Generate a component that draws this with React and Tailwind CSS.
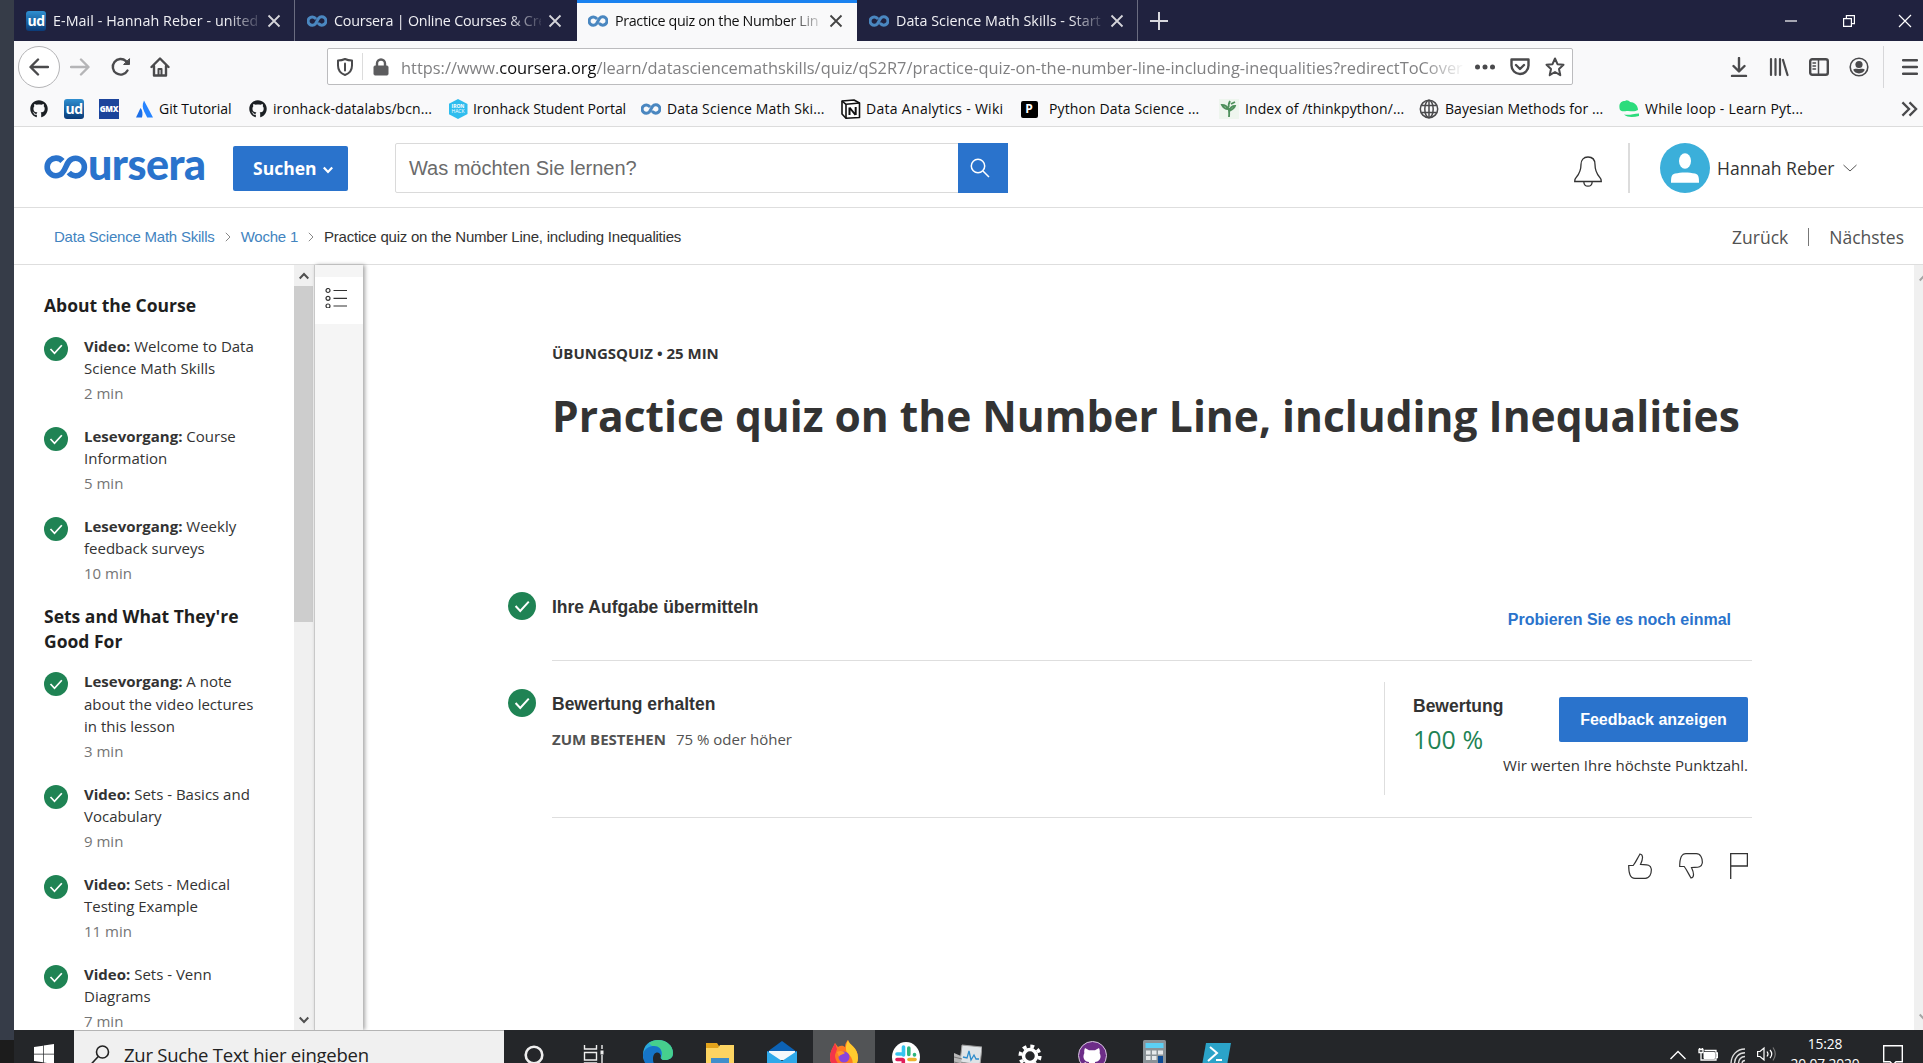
import React from "react";
import { FaGithub } from "react-icons/fa";

const UI = "font-['Open_Sans','Noto_Sans',sans-serif]";
const ARIAL = "font-['Liberation_Sans',Arial,sans-serif]";

function Infinity() {
  return (
    <svg viewBox="0 0 24 15" className="h-3.5 w-5 shrink-0" fill="none" stroke="#4a87c0" strokeWidth="3.6" strokeLinecap="round">
      <path d="M9.8 4A5 5 0 1 0 10 11L14 4.2A5 5 0 1 1 14.2 11" />
    </svg>
  );
}

function UdIcon() {
  return (
    <span className={`${UI} flex h-5 w-5 shrink-0 items-center justify-center rounded-[3px] bg-gradient-to-b from-[#2f8fd0] to-[#0b3b78] text-[14px] leading-none font-bold tracking-[-0.5px] text-white`}>
      ud
    </span>
  );
}

function Cross({ color }) {
  return (
    <svg viewBox="0 0 14 14" className="h-3.5 w-3.5 shrink-0" stroke={color} strokeWidth="1.8">
      <path d="M1.5 1.5l11 11M12.5 1.5l-11 11" />
    </svg>
  );
}

function Tab({ icon, title, active = false, divider = false, className }) {
  return (
    <div
      className={`flex h-full shrink-0 items-center ${
        active ? "border-t-3 border-[#1a82f0] bg-[#f9f9fa] pb-[3px] text-[#111]" : "text-[#f0f0f4]"
      } ${divider ? "border-r border-[#6a6c80]" : ""} ${className}`}
    >
      <div className="flex w-[27px] shrink-0 items-center">{icon}</div>
      <div className="w-[207px] shrink-0 text-[14.3px] leading-5 whitespace-nowrap [mask-image:linear-gradient(to_right,black_84%,transparent_102%)]">{title}</div>
      <div className="ml-[4px] flex w-5 justify-center">
        <Cross color={active ? "#444" : "#d5d5da"} />
      </div>
    </div>
  );
}

function TabBar() {
  return (
    <div className="flex h-[41px] items-center bg-[#20223f]">
      <Tab icon={<UdIcon />} title="E-Mail - Hannah Reber - united" divider className="w-[281px] pl-[12px] tracking-[0.06px]" />
      <Tab icon={<Infinity />} title="Coursera | Online Courses & Cre" className="w-[282px] pl-[12px] tracking-[-0.2px]" />
      <Tab icon={<Infinity />} title="Practice quiz on the Number Lin" active className="w-[280px] pl-[11px] tracking-[-0.34px]" />
      <Tab icon={<Infinity />} title="Data Science Math Skills - Start" divider className="w-[281px] pl-[12px] tracking-[0.02px]" />
      <svg viewBox="0 0 18 18" className="ml-3 h-[18px] w-[18px]" stroke="#d8d8de" strokeWidth="2">
        <path d="M9 0v18M0 9h18" />
      </svg>
      <div className="mr-[11px] ml-auto flex items-center gap-[43px]">
        <svg viewBox="0 0 12 12" className="mr-[3px] h-3 w-3" stroke="#fff" strokeWidth="1.2"><path d="M0 6h12" /></svg>
        <svg viewBox="0 0 12 12" className="h-3 w-3" fill="none" stroke="#fff" strokeWidth="1.2"><path d="M.6 3.6h7.8v7.8H.6zM3.4 3.4V.6h8v8H8.6" /></svg>
        <svg viewBox="0 0 14 14" className="h-3.5 w-3.5" stroke="#fff" strokeWidth="1.2"><path d="M1 1l12 12M13 1L1 13" /></svg>
      </div>
    </div>
  );
}

function NavIcon({ children, className = "h-5 w-5", view = "0 0 20 20", color = "#4a4a4c", sw = 2.4 }) {
  return (
    <svg viewBox={view} className={`${className} shrink-0`} fill="none" stroke={color} strokeWidth={sw} strokeLinecap="round" strokeLinejoin="round">
      {children}
    </svg>
  );
}

function NavBar() {
  return (
    <div className="flex h-[50px] items-center pt-px pl-1">
      <div className="flex h-[42px] w-[42px] items-center justify-center rounded-full border border-[#b4b4b6] bg-white">
        <NavIcon><path d="M19 10H2M9 2.5L1.5 10 9 17.5" /></NavIcon>
      </div>
      <NavIcon className="ml-[10px] h-5 w-5" color="#b5b5b7"><path d="M1 10h17M11 2.5l7.500 7.500-7.500 7.500" /></NavIcon>
      <NavIcon className="ml-[21px] h-5 w-5">
        <path d="M16.500 13.500A7.800 7.800 0 1 1 15 4.200l2 2" />
        <path d="M18.500 2v5.500H13z" fill="#4a4a4c" strokeWidth="1" />
      </NavIcon>
      <NavIcon className="ml-[19px] h-5 w-5">
        <path d="M1.500 10L10 1.500l8.500 8.500M4 9v9.500h12V9" />
        <path d="M8.500 18v-6h3v6" strokeWidth="2" />
      </NavIcon>
      <div className="ml-[157px] flex h-[37px] w-[1246px] items-center rounded-[2px] border border-[#bcbcbe] bg-white">
        <NavIcon className="ml-2 h-[18px] w-[18px]" view="0 0 18 18" sw={2}>
          <path d="M9 1C6.500 2.300 4 2.600 2 2.600v5C2 12 4.500 15.500 9 17c4.500-1.500 7-5 7-9.400v-5C14 2.600 11.500 2.300 9 1z" />
          <path d="M9 5.500v7" />
        </NavIcon>
        <div className="ml-[8px] h-[27px] w-px bg-[#dcdcdc]" />
        <svg viewBox="0 0 16 18" className="ml-[10px] h-[18px] w-4" fill="none" stroke="#5c5c5e">
          <rect x="1" y="8" width="14" height="9" rx="1" fill="#5c5c5e" />
          <path d="M4 9V5.500a4 4 0 0 1 8 0V9" strokeWidth="2.400" />
        </svg>
        <div className="mt-[2px] ml-[12px] w-[1064px] shrink-0 text-[16.4px] leading-6 whitespace-nowrap text-[#808082] [mask-image:linear-gradient(to_right,black_96%,transparent)]">
          https://www.<span className="text-[#0c0c0d]">coursera.org</span>/learn/datasciencemathskills/quiz/qS2R7/practice-quiz-on-the-number-line-including-inequalities?redirectToCover
        </div>
        <svg viewBox="0 0 20 6" className="ml-[10px] h-1.5 w-5" fill="#4a4a4c">
          <circle cx="2.500" cy="3" r="2.500" /><circle cx="10" cy="3" r="2.500" /><circle cx="17.500" cy="3" r="2.500" />
        </svg>
        <NavIcon className="ml-[15px] h-5 w-5"><path d="M1.500 2.500h17v6a8.500 8.500 0 0 1-17 0zM6 8l4 4 4-4" /></NavIcon>
        <NavIcon className="ml-[15px] h-5 w-5" sw={2}><path d="M10 1.500l2.500 5.700 6 .600-4.500 4.200 1.300 6.200L10 15l-5.300 3.200L6 12 1.500 7.800l6-.600z" /></NavIcon>
      </div>
      <div className="mr-[5px] ml-auto flex items-center">
        <NavIcon><path d="M10 1v13M4.500 9L10 14.500 15.500 9M3 19h14" /></NavIcon>
        <NavIcon className="ml-5 h-5 w-5"><path d="M2 2v16M6.500 2v16M11 2v16M14 3l4.500 15" strokeWidth="2.200" /></NavIcon>
        <NavIcon className="ml-5 h-5 w-5"><rect x="1.200" y="2.200" width="17.600" height="15.600" rx="2" /><path d="M9.500 2v16M4 6h2.500M4 9h2.500M4 12h2.500" strokeWidth="1.500" /></NavIcon>
        <NavIcon className="ml-5 h-5 w-5" sw={1.6}>
          <circle cx="10" cy="10" r="8.800" />
          <circle cx="10" cy="7.500" r="3.600" fill="#4a4a4c" stroke="none" />
          <path d="M4.200 12.800c1.500-1.500 3-.800 5.800-.800s4.300-.700 5.800.800c-1 2.200-3 3.600-5.800 3.600s-4.800-1.400-5.800-3.600z" fill="#4a4a4c" stroke="none" />
        </NavIcon>
        <div className="ml-[14px] h-[42px] w-px bg-[#d7d7d9]" />
        <NavIcon className="ml-[18px] h-4 w-4" view="0 0 16 16"><path d="M1 1.200h14M1 8h14M1 14.800h14" /></NavIcon>
      </div>
    </div>
  );
}

function Bookmark({ icon, label, width, gap = "gap-[5px]" }) {
  return (
    <div className={`flex shrink-0 items-center ${gap} ${width}`}>
      <span className="flex w-5 shrink-0 items-center justify-center">{icon}</span>
      {label}
    </div>
  );
}

function BookmarkBar() {
  return (
    <div className="flex h-[36px] items-center border-b border-[#dcdcdc] pt-px pl-[15px] text-[14px] leading-5 whitespace-nowrap text-[#0c0c0d]">
      <Bookmark width="w-[35px]" icon={<FaGithub className="h-[18px] w-[18px] text-[#1b1f23]" />} />
      <Bookmark width="w-[35px]" icon={<UdIcon />} />
      <Bookmark width="w-[35px]" icon={<span className="flex h-5 w-5 items-center justify-center bg-[#1c449b] text-[8px] font-extrabold tracking-[-0.3px] text-white">GMX</span>} />
      <Bookmark
        width="w-[114px]"
        label="Git Tutorial"
        icon={<svg viewBox="0 0 18 18" className="h-[18px] w-[18px]"><path d="M5.500 8L1 17.500h6C8 14 7.500 10 5.500 8z" fill="#1c6fe8" /><path d="M9 .5c-2 4-1.500 7.500.2 11l3 6H18z" fill="#2684ff" /></svg>}
      />
      <Bookmark width="w-[200px] tracking-[0.09px]" label="ironhack-datalabs/bcn..." icon={<FaGithub className="h-[18px] w-[18px] text-[#1b1f23]" />} />
      <Bookmark
        width="w-[193px] tracking-[-0.06px]"
        label="Ironhack Student Portal"
        icon={
          <span className="flex h-5 w-[19px] flex-col items-center justify-center bg-[#2fbdee] text-[5px] leading-[5px] font-bold text-white [clip-path:polygon(50%_0,100%_25%,100%_75%,50%_100%,0_75%,0_25%)]">
            <span>IRON</span><span className="font-normal">HACK</span>
          </span>
        }
      />
      <Bookmark width="w-[200px] tracking-[0.15px]" gap="gap-[6px]" label="Data Science Math Ski..." icon={<Infinity />} />
      <Bookmark
        width="w-[178px] tracking-[0.3px]"
        label="Data Analytics - Wiki"
        icon={
          <svg viewBox="0 0 20 20" className="h-5 w-5" fill="#fff" stroke="#111" strokeWidth="1.600" strokeLinejoin="round">
            <path d="M1 2l12-1 5.500 3v14.500L5 19.200 1 15z" /><path d="M1 2l4 3.300L18.500 4M5 5.300v13.900" fill="none" />
            <path d="M8.500 16V8.500M8.500 8.500l6 7.500M14.700 16V8" fill="none" strokeWidth="2" />
          </svg>
        }
      />
      <Bookmark width="w-[200px] tracking-[0.12px]" gap="gap-[10px]" label="Python Data Science ..." icon={<span className="flex h-[17px] w-[17px] items-center justify-center rounded-[2px] bg-black text-[12px] font-bold text-white">P</span>} />
      <Bookmark
        width="w-[200px] tracking-[0.08px]"
        gap="gap-[6px]"
        label="Index of /thinkpython/..."
        icon={<svg viewBox="0 0 20 20" className="h-5 w-5 bg-[#eef5ee]" fill="none" stroke="#4e8f5c" strokeWidth="1.800"><path d="M10 18c.5-5 0-8-1-10M9 10C6 10 4 8 3 6c3 0 5 1 6 4zM10 12c2-1 5-2 6-5-3 0-5 2-6 5M10 8c-1-2 0-4 1-6M12 5l4-2" /></svg>}
      />
      <Bookmark
        width="w-[200px] tracking-[0.06px]"
        gap="gap-[6px]"
        label="Bayesian Methods for ..."
        icon={<svg viewBox="0 0 20 20" className="h-5 w-5" fill="none" stroke="#4a4a4c" strokeWidth="1.500"><circle cx="10" cy="10" r="8.700" /><ellipse cx="10" cy="10" rx="4.200" ry="8.700" /><path d="M10 1.500v17M2.300 6.500h15.400M2.300 13.500h15.400" /></svg>}
      />
      <Bookmark
        width="w-[200px] tracking-[0.2px]"
        gap="gap-[6px]"
        label="While loop - Learn Pyt..."
        icon={<svg viewBox="0 0 20 18" className="h-[18px] w-5" fill="#2cdc7c"><path d="M1 10C-1 4 2 1 6 1c2-1.500 4 0 5 1 4 0 8 3 8 8-3 2-7 1-10 1-4 0-6 1-8-1zM5 14.500c5 1 9-.500 15-1v2.500c-5 1-11 2-15-1.500z" /></svg>}
      />
      <svg viewBox="0 0 18 16" className="mr-[5px] ml-auto h-4 w-[17px]" fill="none" stroke="#4a4a4c" strokeWidth="2.400"><path d="M1.500 1l7 7-7 7M9 1l7 7-7 7" /></svg>
    </div>
  );
}

function SiteHeader() {
  return (
    <header className="flex h-[81px] items-center border-b border-[#dedede] pt-[2px] pl-[30px]">
      <div className="flex w-[161px] shrink-0 items-center">
        <svg viewBox="0 0 44 24" className="mt-[-2px] h-6 w-11 shrink-0" fill="none" stroke="#2a73cc" strokeWidth="5.6">
          <path d="M18.500 6A8.800 8.800 0 1 0 18 18.300C21.500 15 22 9.500 25.200 6A8.800 8.800 0 1 1 24.800 17.600" />
        </svg>
        <span className="mt-[-9px] font-['Lato',sans-serif] text-[43px] leading-9 font-black tracking-[-0.5px] text-[#2a73cc]">ursera</span>
      </div>
      <button className="ml-[28px] flex h-[45px] w-[115px] items-center rounded-[2px] bg-[#2a73cc] pl-[20px] text-[17.5px] font-bold text-white">
        Suchen
        <svg viewBox="0 0 10 8" className="mt-[3px] ml-[7px] h-2 w-2.5" fill="none" stroke="#fff" strokeWidth="2.200"><path d="M.8 1.500L5 6l4.200-4.500" /></svg>
      </button>
      <div className="ml-[47px] flex h-[50px] w-[613px] rounded-[2px] border border-[#dadada]">
        <div className={`${ARIAL} flex flex-1 items-center pl-[13px] text-[20px] tracking-[-0.03px] text-[#6b6b6b]`}>Was möchten Sie lernen?</div>
        <div className="-my-px -mr-px flex w-[50px] items-center justify-center bg-[#2a73cc]">
          <svg viewBox="0 0 20 20" className="mr-1.5 h-5 w-5" fill="none" stroke="#fff" strokeWidth="1.500"><circle cx="8" cy="8" r="6.700" /><path d="M13 13l6 6" /></svg>
        </div>
      </div>
      <div className="mr-[66px] ml-auto flex items-center">
        <svg viewBox="0 0 28 31" className="mt-1.5 h-[31px] w-7" fill="none" stroke="#333" strokeWidth="1.300">
          <path d="M14 1C9.500 1 7 4 7 8.500c0 6-1.500 9-4.500 12.500C1 22.500.7 24 .7 25.500h26.600c0-1.500-.3-3-1.800-4.500C22.500 17.500 21 14.500 21 8.500 21 4 18.500 1 14 1zM9.800 25.700c.3 6 8.100 6 8.400 0" />
        </svg>
        <div className="ml-[26px] h-[50px] w-[2px] bg-[#dcdcdc]" />
        <svg viewBox="0 0 50 50" className="ml-[30px] h-[50px] w-[50px]">
          <circle cx="25" cy="25" r="25" fill="#3bafda" />
          <ellipse cx="25" cy="18" rx="6" ry="7.700" fill="#fff" />
          <path d="M11 39.800c0-6 .5-8.300 4-9.300 6-1.500 14-1.500 20 0 3.500 1 4 3.300 4 9.300z" fill="#fff" />
        </svg>
        <span className="ml-[7px] w-[118px] text-[17.5px] whitespace-nowrap text-[#333]">Hannah Reber</span>
        <svg viewBox="0 0 14 8" className="ml-2 h-2 w-3.5" fill="none" stroke="#555"><path d="M.5 1L7 7l6.500-6" /></svg>
      </div>
    </header>
  );
}

function Crumb() {
  return <svg viewBox="0 0 6 10" className="mr-[10px] ml-[10px] h-2.5 w-1.5" fill="none" stroke="#888"><path d="M.8.8L5 5 .8 9.200" /></svg>;
}

function Breadcrumbs() {
  return (
    <nav className="flex h-[57px] items-center border-b border-[#dedede] pt-[2px] pl-[40px]">
      <div className={`${ARIAL} flex items-center text-[15px] tracking-[-0.22px] text-[#4284bf]`}>
        <span>Data Science Math Skills</span>
        <Crumb />
        <span>Woche 1</span>
        <Crumb />
        <span className="text-[#333]">Practice quiz on the Number Line, including Inequalities</span>
      </div>
      <div className="mr-[19px] ml-auto flex items-center text-[17.5px] text-[#525252]">
        <span>Zurück</span>
        <span className="mx-[20px] h-[18px] w-px bg-[#777]" />
        <span>Nächstes</span>
      </div>
    </nav>
  );
}

function Check({ className }) {
  return (
    <svg viewBox="0 0 24 24" className={`${className} shrink-0`}>
      <circle cx="12" cy="12" r="12" fill="#1f8354" />
      <path d="M6.500 12l4 4.300 7.300-8" fill="none" stroke="#fff" strokeWidth="1.700" />
    </svg>
  );
}

const SECTIONS = [
  {
    title: ["About the Course"],
    items: [
      { kind: "Video:", lines: ["Welcome to Data", "Science Math Skills"], time: "2 min" },
      { kind: "Lesevorgang:", lines: ["Course", "Information"], time: "5 min" },
      { kind: "Lesevorgang:", lines: ["Weekly", "feedback surveys"], time: "10 min" },
    ],
  },
  {
    title: ["Sets and What They're", "Good For"],
    items: [
      { kind: "Lesevorgang:", lines: ["A note", "about the video lectures", "in this lesson"], time: "3 min" },
      { kind: "Video:", lines: ["Sets - Basics and", "Vocabulary"], time: "9 min" },
      { kind: "Video:", lines: ["Sets - Medical", "Testing Example"], time: "11 min" },
      { kind: "Video:", lines: ["Sets - Venn", "Diagrams"], time: "7 min" },
    ],
  },
];

function Sidebar() {
  return (
    <aside className="h-full w-[280px] shrink-0 overflow-hidden pt-[28px] pl-[30px] whitespace-nowrap">
      {SECTIONS.map((section) => (
        <section key={section.title[0]} className="-mb-px">
          <h2 className="mb-[16.5px] text-[17.5px] leading-[25px] font-bold text-[#1f1f1f]">
            {section.title.map((line) => <div key={line}>{line}</div>)}
          </h2>
          {section.items.map((item) => (
            <div key={item.lines.join()} className="flex gap-4 pb-[20px]">
              <Check className="mt-[2px] h-6 w-6" />
              <div className="text-[15px] leading-[22.5px] text-[#333]">
                {item.lines.map((line, i) => (
                  <div key={line}>{i === 0 && <b>{item.kind} </b>}{line}</div>
                ))}
                <div className="mt-[2.5px] text-[#757575]">{item.time}</div>
              </div>
            </div>
          ))}
        </section>
      ))}
    </aside>
  );
}

function Chevron({ up = false }) {
  return <svg viewBox="0 0 10 8" className="h-2 w-2.5" fill="none" stroke="#505050" strokeWidth="2"><path d={up ? "M.7 6.500L5 2l4.300 4.500" : "M.7 1.500L5 6l4.300-4.500"} /></svg>;
}

function SideScroll() {
  return (
    <>
      <div className="flex h-full w-[20px] shrink-0 flex-col items-center bg-[#f0f0f0]">
        <div className="flex h-[21px] items-center"><Chevron up /></div>
        <div className="mr-px h-[336px] w-[19px] bg-[#cdcdcd]" />
        <div className="mt-auto flex h-[21px] items-center"><Chevron /></div>
      </div>
      <div className="h-full w-[49px] shrink-0 border-l border-[#c8c8c8] bg-[#f5f5f5] pt-3 shadow-[2px_0_4px_rgba(0,0,0,0.35)]">
        <div className="flex h-[47px] items-center bg-white pl-[10px]">
          <svg viewBox="0 0 22 20" className="mb-1.5 h-5 w-[22px]" fill="none" stroke="#333" strokeWidth="1.200">
            <circle cx="3" cy="2.500" r="2" /><circle cx="3" cy="10.300" r="2" /><circle cx="3" cy="18" r="2" />
            <path d="M8.500 2.500H22M8.500 10.300H22M8.500 18H22" />
          </svg>
        </div>
      </div>
    </>
  );
}

function Quiz() {
  return (
    <main className="flex-1 pt-[78px] pl-[145px] text-[#333]">
      <div className="pl-11">
        <div className="text-[15px] leading-5 font-bold">ÜBUNGSQUIZ • 25 MIN</div>
        <h1 className="mt-[23px] text-[42.5px] leading-[60px] font-bold whitespace-nowrap">Practice quiz on the Number Line, including Inequalities</h1>
      </div>
      <div className="mt-[146px] flex gap-4">
        <Check className="h-7 w-7" />
        <div className={`${ARIAL} flex h-[69px] w-[1200px] justify-between border-b border-[#dedede] font-bold`}>
          <div className="pt-px text-[17.5px] leading-7">Ihre Aufgabe übermitteln</div>
          <div className="mt-[18px] mr-[21px] text-[16px] leading-5 text-[#2a73cc]">Probieren Sie es noch einmal</div>
        </div>
      </div>
      <div className="flex gap-4">
        <Check className="mt-7 h-7 w-7" />
        <div className="flex h-[157px] w-[1200px] justify-between border-b border-[#dedede]">
          <div className="pt-[29px]">
            <div className={`${ARIAL} text-[17.5px] leading-7 font-bold`}>Bewertung erhalten</div>
            <div className="mt-[9px] flex gap-[10px] text-[15px] leading-6 text-[#525252]"><b>ZUM BESTEHEN</b><span>75 % oder höher</span></div>
          </div>
          <div className="mt-[21px] mr-1 flex h-[113px] border-l border-[#dedede] pl-7">
            <div className="w-[90px] pt-[10px] whitespace-nowrap">
              <div className={`${ARIAL} text-[17.5px] leading-7 font-bold`}>Bewertung</div>
              <div className="mt-[2px] text-[25px] leading-[34px] text-[#1f8354]">100 %</div>
            </div>
            <div className="flex w-[245px] flex-col items-end pt-[15px]">
              <button className={`${ARIAL} h-[45px] w-[189px] rounded-[2px] bg-[#2a73cc] text-[16px] font-bold text-white`}>Feedback anzeigen</button>
              <div className="mt-[13px] text-[15px] leading-5 whitespace-nowrap">Wir werten Ihre höchste Punktzahl.</div>
            </div>
          </div>
        </div>
      </div>
      <div className="mt-[35px] flex w-[1240px] justify-end gap-[27px]">
        <svg viewBox="0 0 24 26" className="h-[26px] w-6" fill="none" stroke="#333" strokeWidth="1.200"><path d="M.7 12.500h4.500C8 9 9.500 5 12 1c3 .500 3.500 4 .500 10.500C17 12 22.500 10.500 23.300 16c.3 5-1.800 9.300-6 9.300H7C2 25.300.7 20 .7 12.500z" /></svg>
        <svg viewBox="0 0 24 26" className="h-[26px] w-6" fill="none" stroke="#333" strokeWidth="1.200"><path d="M.7 13.500h4.500C8 17 9.500 21 12 25c3-.500 3.500-4 .500-10.500C17 14 22.500 15.500 23.300 10c.3-5-1.800-9.300-6-9.300H7C2 .7.7 6 .7 13.500z" /></svg>
        <svg viewBox="0 0 18 26" className="h-[26px] w-[18px]" fill="none" stroke="#333" strokeWidth="1.300"><path d="M.7 26V.7h16.700V13H.7" /></svg>
      </div>
    </main>
  );
}

function TaskIcon({ children, active = false }) {
  return <div className={`flex h-full w-[62px] shrink-0 justify-center pt-[10px] ${active ? "bg-[#525456]" : ""}`}>{children}</div>;
}

function Taskbar() {
  return (
    <footer className="flex h-[33px] w-full shrink-0 overflow-hidden bg-[#242629]">
      <div className="w-[60px] shrink-0 pt-[14px] pl-[20px]">
        <svg viewBox="0 0 20 20" className="h-5 w-5" fill="#fff"><path d="M0 3l9-1.300V9.700H0zM9.700 1.500L20 0v9.700H9.700zM0 10.400h9V18.300L0 17zM9.700 10.400H20V20L9.700 18.500z" /></svg>
      </div>
      <div className="flex h-[60px] w-[430px] shrink-0 border-t border-[#b4b4b4] bg-[#f0f0f0] pl-[16px] text-[18.5px] leading-6 text-[#222]">
        <svg viewBox="0 0 20 20" className="mt-[14px] h-5 w-5" fill="none" stroke="#222" strokeWidth="1.600"><circle cx="12.500" cy="7" r="6" /><path d="M8.300 11.500L.8 19.500" /></svg>
        <span className="mt-[12px] ml-[14px] tracking-[-0.24px] whitespace-nowrap">Zur Suche Text hier eingeben</span>
      </div>
      <div className="-ml-px flex h-[60px] shrink-0">
        <TaskIcon><svg viewBox="0 0 20 20" className="mt-[5px] h-5 w-5" fill="none" stroke="#eee" strokeWidth="2.600"><circle cx="10" cy="10" r="8.300" /></svg></TaskIcon>
        <TaskIcon><svg viewBox="0 0 22 20" className="mt-[5px] mr-1 h-5 w-[22px]" fill="none" stroke="#eee" strokeWidth="1.400"><path d="M1.500 0v4h12V0M1.500 7.500h12V15h-12zM1.500 20v-2h12v2M19 0v4M19 10v9" /><path d="M19 5.500v4" strokeWidth="3" /></svg></TaskIcon>
        <TaskIcon>
          <svg viewBox="0 0 30 30" className="h-[30px] w-[30px]"><path d="M0 15C0 5 7 0 15 0c9 0 15 6 15 13 0 6-5 7-8 7-4 0-5-2-4-4 0-4-4-6-8-5-6 1-9 5-10 9z" fill="#2aa7dc" /><path d="M15 0c9 0 15 6 15 13 0 6-5 7-8 7-4 0-4-2-3-4 1-7-5-10-10-10L6 3c3-2 5-3 9-3z" fill="#46cf8d" /><path d="M0 15c1-7 7-9 11-9 6 0 9 5 7 10-1-5-8-5-8 3 0 6 4 9 7 11C7 31 0 24 0 15z" fill="#1675c8" /></svg>
        </TaskIcon>
        <TaskIcon>
          <svg viewBox="0 0 28 26" className="mt-[3px] h-[26px] w-7"><path d="M0 0h11l2 3v4H0z" fill="#e2a31c" /><path d="M0 5h12l2-3h14v24H0z" fill="#fcd462" /><path d="M5 15h18v11h-5v-6h-8v6H5z" fill="#3f8ecb" /></svg>
        </TaskIcon>
        <TaskIcon>
          <svg viewBox="0 0 30 30" className="mt-px h-[30px] w-[30px]"><path d="M0 11L15 0l15 11v4H0z" fill="#0c62b5" /><path d="M2 10h26v9H2z" fill="#f4f8fb" /><path d="M0 10l15 10 15-10v20H0z" fill="#2fa9ea" /></svg>
        </TaskIcon>
        <TaskIcon active>
          <svg viewBox="0 0 28 30" className="h-[30px] w-7"><path d="M0 18C0 11 3 8 5 3l3 4c4-2 5-1 7 0 0-4 2-6 3-7 1 5 10 7 10 18 0 8-7 12-14 12S0 26 0 18z" fill="#ff7a22" /><path d="M18 0c1 5 10 7 10 18 0 5-3 9-6 10 2-6 0-12-5-15-2-4-1-9 1-13z" fill="#ffcb2e" /><path d="M0 18C0 11 3 8 5 3l2 6-2 6c0 5 3 10 8 12C5 29 0 25 0 18z" fill="#f4344a" /><circle cx="14" cy="17" r="5.500" fill="#8a45dc" /><path d="M7 12c3-2 6-1 8 1-2 2-5 1-6 4z" fill="#ff9a2b" /></svg>
        </TaskIcon>
        <TaskIcon>
          <svg viewBox="0 0 28 30" className="mt-[2px] h-[30px] w-7" fill="none" strokeWidth="3.600" strokeLinecap="round"><ellipse cx="14" cy="15" rx="14" ry="15" fill="#fff" /><path d="M11.500 5v8" stroke="#36c5f0" /><path d="M5 12h6" stroke="#36c5f0" /><path d="M16.800 6v6.500M22.500 13v-.5" stroke="#2eb67d" /><path d="M17 17.500h6" stroke="#ecb22e" /><path d="M5 17.500h5.500M11.300 18v6" stroke="#e01e5a" /></svg>
        </TaskIcon>
        <TaskIcon>
          <svg viewBox="0 0 28 28" className="mt-[4px] h-7 w-7"><path d="M8 1l20 2-2 18-20-3z" fill="#dfe3e6" stroke="#999" /><path d="M0 9l7 3 1 16-8-3z" fill="#b8b8b8" /><path d="M0 13l8 2M0 18l8 2" stroke="#777" /><path d="M9 13l4 1 2-7 2 9 3-5 2 4 3 0" fill="none" stroke="#2d8ccc" strokeWidth="1.300" /></svg>
        </TaskIcon>
        <TaskIcon>
          <svg viewBox="0 0 24 24" className="mt-[4px] h-6 w-6" fill="none" stroke="#fff"><circle cx="12" cy="12" r="6.500" strokeWidth="3.500" /><circle cx="12" cy="12" r="9.800" strokeWidth="3.600" strokeDasharray="3.850 3.850" /></svg>
        </TaskIcon>
        <TaskIcon>
          <span className="mt-px flex h-[29px] w-[29px] items-center justify-center rounded-full border border-[#d8c8e0] bg-[#6d2d88] text-white">
            <svg viewBox="0 0 24 24" className="h-6 w-6" fill="#fff"><path d="M5 4l4 2.200h6L19 4c1 2 .9 4 .6 5 2.400 4.500 0 8.500-4.600 9v6H9v-3c-3 0-3-2-5-3 2 0 3 2 5 1v-1C4.400 17.500 2 13.500 4.400 9 4.100 8 4 6 5 4z" /></svg>
          </span>
        </TaskIcon>
        <TaskIcon>
          <svg viewBox="0 0 23 30" className="h-[30px] w-[23px]"><rect width="23" height="34" rx="1.500" fill="#8a9297" /><rect x="2.500" y="3" width="18" height="5" fill="#5cd0f5" /><path d="M3 10.500h4.500v4H3zM9 10.500h4.500v4H9zM15 10.500h5v4h-5zM3 16h4.500v4H3zM9 16h4.500v4H9z" fill="#e6e9eb" /><path d="M15 16h5v9h-5z" fill="#0c4a94" /></svg>
        </TaskIcon>
        <TaskIcon>
          <svg viewBox="0 0 30 28" className="mt-[3px] h-7 w-[30px]"><path d="M5 0h25l-5 28H0z" fill="#2ba3c8" /><path d="M9 4l7 6-9 8M15 17h6" fill="none" stroke="#fff" strokeWidth="2" /></svg>
        </TaskIcon>
      </div>
      <div className="mr-[20px] ml-auto flex h-[60px] shrink-0 items-start text-white">
        <svg viewBox="0 0 16 10" className="mt-[20px] h-2.5 w-4" fill="none" stroke="#fff" strokeWidth="1.400"><path d="M.5 9L8 1.500 15.500 9" /></svg>
        <svg viewBox="0 0 20 14" className="mt-[18px] ml-[12px] h-3.5 w-5" fill="none" stroke="#fff"><path d="M1 1.500h4v3H1zM1.700 0v2M4.300 0v2M3 4.500V12h15V2.500H6.500M18 5h1.500v4.500H18" strokeWidth="1.300" /><path d="M6 4.500h10.500v6H6z" fill="#fff" /></svg>
        <svg viewBox="0 0 16 16" className="mt-[18px] ml-[12px] h-4 w-4" fill="none" stroke="#ddd" strokeWidth="1.400"><path d="M1 16C1 7 7 1 15 1M4.500 16C4.500 9 9 4.700 15 4.700M8.500 16c0-4.500 2.500-7.500 6.500-7.500M12 16c0-2 1-3.500 3-3.500" /></svg>
        <svg viewBox="0 0 20 16" className="mt-[16px] ml-[11px] h-4 w-5" fill="none" stroke="#fff" strokeWidth="1.200"><path d="M.6 5.500H3L7 2v12l-4-3.500H.6zM10 5.500q2 2.500 0 5M13 4q3.500 4 0 8" /><path d="M16 1.500q4.500 6.500 0 13" stroke="#777" /></svg>
        <div className="ml-[13px] w-[70px] pt-[4px] text-center text-[13.8px] leading-5 tracking-[-0.15px] whitespace-nowrap"><div>15:28</div><div>20.07.2020</div></div>
        <svg viewBox="0 0 20 22" className="mt-[15px] ml-[23px] h-[22px] w-5" fill="none" stroke="#fff" strokeWidth="1.400"><path d="M.7.700h18.600v16H13L10 20l-3-3.300H.7z" /></svg>
      </div>
    </footer>
  );
}

export default function App() {
  return (
    <div className={`${UI} flex h-[1063px] w-[1923px] overflow-hidden bg-white`}>
      <div className="flex w-[14px] shrink-0 flex-col bg-[#363c48]"><div className="mt-auto h-[23px] bg-[#1c1c1c]" /></div>
      <div className="flex min-w-0 flex-1 flex-col">
        <TabBar />
        <div className="bg-[#f9f9fa]">
          <NavBar />
          <BookmarkBar />
        </div>
        <SiteHeader />
        <Breadcrumbs />
        <div className="flex min-h-0 flex-1">
          <Sidebar />
          <SideScroll />
          <Quiz />
          <div className="flex h-full w-[9px] shrink-0 flex-col justify-between overflow-hidden bg-[#f0f0f0] py-[9px] pl-[5px]">
            <svg viewBox="0 0 10 8" className="h-2 w-2.5 shrink-0" fill="none" stroke="#a5a5a5" strokeWidth="2"><path d="M.7 6.500L5 2l4.300 4.500" /></svg>
            <svg viewBox="0 0 10 8" className="h-2 w-2.5 shrink-0" fill="none" stroke="#a5a5a5" strokeWidth="2"><path d="M.7 1.500L5 6l4.300-4.500" /></svg>
          </div>
        </div>
        <Taskbar />
      </div>
    </div>
  );
}
